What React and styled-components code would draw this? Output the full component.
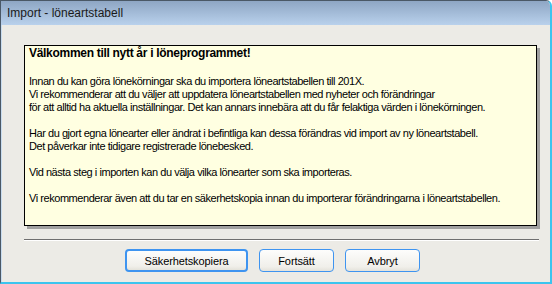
import React from 'react';
import styled, { createGlobalStyle } from 'styled-components';

const Global = createGlobalStyle`
  html, body { margin: 0; padding: 0; }
  body { width: 552px; height: 284px; overflow: hidden; background: #fff; }
`;

const Window = styled.div`
  box-sizing: border-box;
  width: 552px;
  height: 284px;
  display: flex;
  flex-direction: column;
  background: #ecebe6;
  border: 1px solid #4a5866;
  border-right: 2px solid #3cc4ee;
  border-bottom: 2px solid #3cc4ee;
  border-top-right-radius: 6px;
  overflow: hidden;
  font-family: 'Liberation Sans', Arial, sans-serif;
`;

const TitleBar = styled.div`
  height: 24px;
  flex: none;
  display: flex;
  align-items: center;
  padding-left: 6px;
  background: linear-gradient(#8ea6c4, #b9d1ec);
  color: #1a1a1a;
  font-size: 12px;
`;

const Body = styled.div`
  flex: 1;
  display: flex;
  flex-direction: column;
  padding: 20px 12px 0 22px;
  border-left: 1px solid #c8dcef;
`;

const Note = styled.div`
  box-sizing: border-box;
  width: 513px;
  height: 181px;
  background: #ffffe1;
  border: 1px solid #000;
  box-shadow: 3px 3px 0 #a0a0a0;
  padding: 1px 4px;
  font-size: 11px;
  line-height: 13px;
  letter-spacing: -0.45px;
  white-space: nowrap;
  color: #000;
`;

const Heading = styled.div`
  font-weight: bold;
  font-size: 12px;
  letter-spacing: -0.3px;
  margin-bottom: 15px;
`;

const Para = styled.p`
  margin: 0 0 13px;
`;

const Divider = styled.div`
  height: 1px;
  width: 515px;
  margin-top: 13px;
  background: #6f6f6f;
  border-bottom: 1px solid #fff;
`;

const Buttons = styled.div`
  display: flex;
  gap: 11px;
  padding-left: 101px;
  margin-top: 8px;
`;

const Button = styled.button`
  box-sizing: border-box;
  width: ${p => p.$w}px;
  height: 23px;
  border: ${p => (p.$primary ? 2 : 1)}px solid #3e94f0;
  border-radius: 4px;
  background: linear-gradient(#fdfdfc, #f0efea 80%, #e4e2da);
  font-family: 'Liberation Sans', Arial, sans-serif;
  font-size: 11px;
  letter-spacing: -0.1px;
  color: #000;
  padding: 0;
`;

export default function App() {
  return (
    <>
      <Global />
      <Window>
        <TitleBar>Import - löneartstabell</TitleBar>
        <Body>
          <Note>
            <Heading>Välkommen till nytt år i löneprogrammet!</Heading>
            <Para>
              Innan du kan göra lönekörningar ska du importera löneartstabellen till 201X.
              <br />
              Vi rekommenderar att du väljer att uppdatera löneartstabellen med nyheter och förändringar
              <br />
              för att alltid ha aktuella inställningar. Det kan annars innebära att du får felaktiga värden i lönekörningen.
            </Para>
            <Para>
              Har du gjort egna lönearter eller ändrat i befintliga kan dessa förändras vid import av ny löneartstabell.
              <br />
              Det påverkar inte tidigare registrerade lönebesked.
            </Para>
            <Para>Vid nästa steg i importen kan du välja vilka lönearter som ska importeras.</Para>
            <Para>
              Vi rekommenderar även att du tar en säkerhetskopia innan du importerar förändringarna i löneartstabellen.
            </Para>
          </Note>
          <Divider />
          <Buttons>
            <Button $w={123} $primary>Säkerhetskopiera</Button>
            <Button $w={75}>Fortsätt</Button>
            <Button $w={75}>Avbryt</Button>
          </Buttons>
        </Body>
      </Window>
    </>
  );
}
